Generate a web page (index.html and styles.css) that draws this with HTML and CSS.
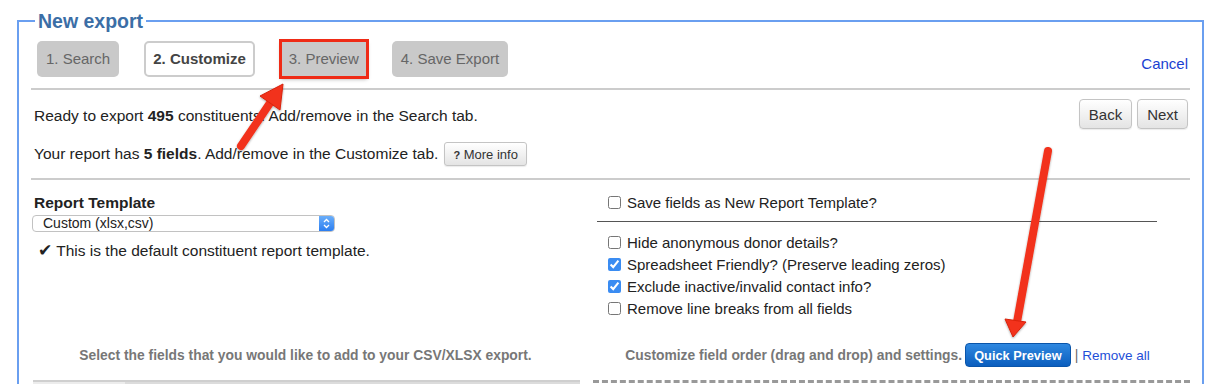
FILE: index.html
```html
<!DOCTYPE html>
<html lang="en">
<head>
    <meta charset="UTF-8">
    <title>New export</title>
    <link rel="stylesheet" href="styles.css">
</head>
<body>
    <fieldset class="export">
        <legend>New export</legend>

        <div class="steps">
            <span class="step">1. Search</span>
            <span class="step current">2. Customize</span>
            <span class="step marked">3. Preview</span>
            <span class="step">4. Save Export</span>
            <a href="#" class="cancel">Cancel</a>
        </div>

        <hr class="sep">

        <div class="info">
            <div class="info-row">
                <p class="low">Ready to export <b>495</b> constituents. Add/remove in the Search tab.</p>
                <div class="nav">
                    <button class="btn">Back</button>
                    <button class="btn">Next</button>
                </div>
            </div>
            <div class="info-row second">
                <p>Your report has <b>5 fields</b>. Add/remove in the Customize tab.</p>
                <button class="btn small"><b>?</b> More info</button>
            </div>
        </div>

        <hr class="sep sep-low">

        <div class="columns">
            <div class="col-left">
                <h3>Report Template</h3>
                <div class="select">
                    <span class="select-value">Custom (xlsx,csv)</span>
                    <span class="stepper">
                        <svg width="7" height="11" viewBox="0 0 7 11">
                            <path d="M1 4 L3.5 1.5 L6 4 M1 7 L3.5 9.5 L6 7" fill="none" stroke="#fff" stroke-width="1.3"/>
                        </svg>
                    </span>
                </div>
                <p class="note"><span class="tick">✔</span>This is the default constituent report template.</p>
            </div>

            <div class="col-right">
                <label class="opt"><input type="checkbox">Save fields as New Report Template?</label>
                <div class="dark-line"></div>
                <div class="opts">
                    <label class="opt"><input type="checkbox">Hide anonymous donor details?</label>
                    <label class="opt"><input type="checkbox" checked>Spreadsheet Friendly? (Preserve leading zeros)</label>
                    <label class="opt"><input type="checkbox" checked>Exclude inactive/invalid contact info?</label>
                    <label class="opt"><input type="checkbox">Remove line breaks from all fields</label>
                </div>
            </div>

            <div class="hint">Select the fields that you would like to add to your CSV/XLSX export.</div>
            <div class="hint hint-right">
                Customize field order (drag and drop) and settings.
                <button class="btn-blue">Quick Preview</button>
                <span class="pipe">|</span>
                <a href="#" class="link">Remove all</a>
            </div>

            <div class="field-box"><span class="field-tab"></span></div>
            <div class="drop-box"></div>
        </div>
    </fieldset>

    <svg class="arrows" width="1219" height="384" viewBox="0 0 1219 384">
        <defs>
            <filter id="shadow" x="-20%" y="-20%" width="140%" height="140%">
                <feDropShadow dx="0" dy="1" stdDeviation="1.2" flood-color="#000" flood-opacity="0.35"/>
            </filter>
        </defs>
        <g filter="url(#shadow)" fill="#f2321a" stroke="#d8240e" stroke-width="1">
            <line x1="241" y1="146" x2="270" y2="103" stroke="#f2321a" stroke-width="8" stroke-linecap="round"/>
            <polygon points="283,84 260,96 280,110"/>
            <line x1="1048" y1="151" x2="1017" y2="322" stroke="#f2321a" stroke-width="8" stroke-linecap="round"/>
            <polygon points="1013,337 1005,319 1026,322"/>
        </g>
    </svg>
</body>
</html>
```

FILE: styles.css
```css
body {
    margin: 0;
    padding: 10px 15px 0 17px;
    font-family: "Liberation Sans", Arial, sans-serif;
    color: #222;
    background: #fff;
    overflow: hidden;
    position: relative;
}

.export {
    margin: 0;
    padding: 0 12px;
    border: 2px solid #6a9ff0;
    min-width: 0;
}

.export legend {
    margin-left: 4px;
    padding: 0 3px;
    font-size: 19.5px;
    line-height: 22px;
    font-weight: bold;
    color: #3b6ea6;
}

/* steps */

.steps {
    display: flex;
    align-items: center;
    gap: 25px;
    margin-top: 9px;
    padding-left: 6px;
}

.step {
    height: 36px;
    line-height: 36px;
    padding: 0 9px;
    border-radius: 5px;
    font-size: 15px;
    color: #666;
    background: #c9c9c9;
    box-sizing: border-box;
}

.step.current {
    background: #fff;
    border: 2px solid #ccc;
    line-height: 32px;
    padding: 0 7px;
    font-weight: bold;
    color: #444;
}

.step.marked {
    margin-left: 1px;
    padding: 0 8px;
    border-radius: 0;
    outline: 3px solid #ef2b16;
    outline-offset: -1px;
    box-shadow: 0 2px 4px rgba(0, 0, 0, 0.35);
}

.cancel {
    margin-left: auto;
    margin-top: 8px;
    margin-right: 2px;
    font-size: 15px;
    color: #1a3fd1;
    text-decoration: none;
}

.sep {
    border: 0;
    height: 2px;
    background: #ccc;
    margin: 11px 0 0;
}

.sep-low {
    margin-top: 12px;
}

/* info */

.info-row {
    display: flex;
    align-items: center;
    margin-top: 9px;
    padding-left: 3px;
}

.info-row.second {
    margin-top: 13px;
}

.info-row p {
    margin: 0;
    font-size: 15.5px;
}

.info-row p.low {
    padding-top: 4px;
}

.nav {
    display: flex;
    gap: 5px;
    margin-left: auto;
    margin-right: 2px;
}

.btn {
    height: 30px;
    padding: 0 9px;
    font-family: "Liberation Sans", Arial, sans-serif;
    font-size: 15px;
    color: #333;
    background: linear-gradient(#fff, #e4e4e4);
    border: 1px solid #c4c4c4;
    border-radius: 4px;
    box-shadow: 0 1px 1px rgba(0, 0, 0, 0.08);
}

.btn.small {
    height: 24px;
    margin-left: 6px;
    padding: 0 8px;
    font-size: 13px;
    border-radius: 3px;
}

.btn.small b {
    font-size: 11px;
}

/* columns */

.columns {
    display: grid;
    grid-template-columns: 549px 1fr;
    column-gap: 13px;
}

.col-left {
    padding-top: 14px;
}

.col-left h3 {
    margin: 0 0 0 3px;
    font-size: 15.5px;
    line-height: 18px;
}

.select {
    display: flex;
    width: 303px;
    height: 17px;
    margin: 3px 0 0 1px;
    border: 1px solid #c2c2c2;
    border-radius: 4px;
    box-sizing: border-box;
    overflow: hidden;
    background: #fff;
}

.select-value {
    flex: 1;
    padding-left: 10px;
    font-size: 14px;
    line-height: 15px;
}

.stepper {
    width: 15px;
    display: flex;
    align-items: center;
    justify-content: center;
    background: linear-gradient(#6aaefa, #2c7ef0);
}

.note {
    margin: 9px 0 0 7px;
    font-size: 15.5px;
    line-height: 18px;
}

.tick {
    font-family: "DejaVu Sans", sans-serif;
    font-size: 17px;
    margin-right: 4px;
}

.col-right {
    padding: 12px 0 0 15px;
}

.opt {
    display: flex;
    align-items: center;
    height: 20px;
    font-size: 15px;
}

.opt input {
    width: 13px;
    height: 13px;
    margin: 0 6px 0 0;
    accent-color: #3a8cf2;
}

.dark-line {
    width: 560px;
    margin: 9px 0 0 -11px;
    border-top: 1px solid #555;
}

.opts {
    margin-top: 9px;
}

.opts .opt {
    height: 22px;
}

.hint {
    display: flex;
    align-items: center;
    justify-content: center;
    height: 24px;
    margin-top: 24px;
    font-size: 13.85px;
    font-weight: bold;
    color: #777;
}

.hint-right {
    padding-right: 8px;
}

.btn-blue {
    height: 24px;
    margin-left: 3px;
    padding: 0 8px;
    font-family: "Liberation Sans", Arial, sans-serif;
    font-size: 12.8px;
    font-weight: bold;
    color: #fff;
    background: linear-gradient(#2f88e0, #0b5ebe);
    border: 1px solid #0a55aa;
    border-radius: 4px;
}

.pipe {
    margin: 0 4px;
    font-weight: normal;
    color: #666;
}

.link {
    font-size: 13.5px;
    font-weight: normal;
    color: #1f4fd8;
    text-decoration: none;
}

.field-box {
    display: flex;
    height: 20px;
    margin: 13px 0 0 2px;
    border-top: 2px solid #cfcfcf;
    background: #dcdcdc;
}

.field-tab {
    width: 92px;
    background: #ececec;
}

.drop-box {
    margin-top: 13px;
    border-top: 3px dashed #999;
}

.arrows {
    position: absolute;
    top: 0;
    left: 0;
    pointer-events: none;
}
```
